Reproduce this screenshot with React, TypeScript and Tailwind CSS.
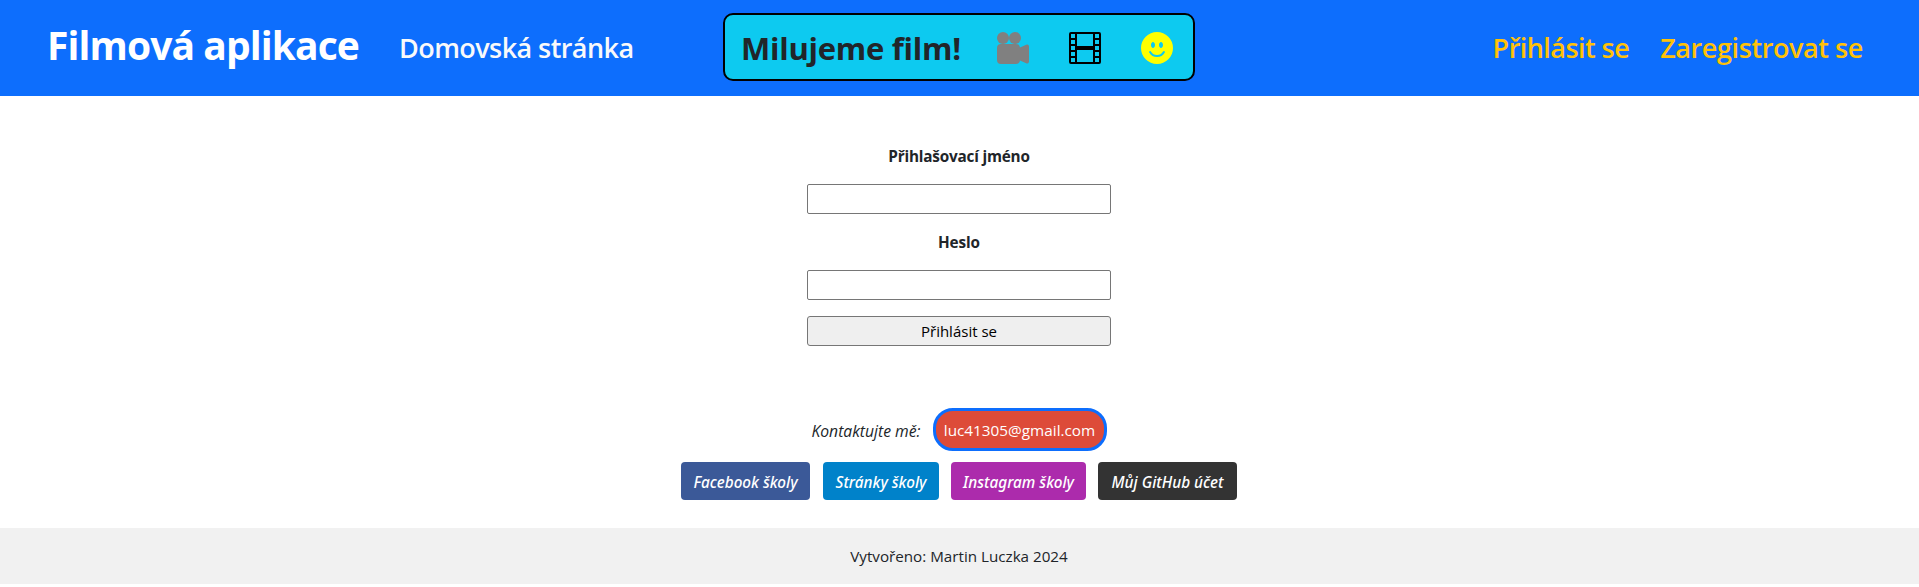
import { BsCameraReelsFill, BsEmojiSmileFill, BsFilm } from 'react-icons/bs';

const navLink = 'text-[27px] leading-[42px] font-semibold whitespace-nowrap';

function Header() {
  return (
    <header className="flex h-24 items-center justify-between bg-[#0d6efd] pr-14 pl-[47px]">
      <nav className="flex w-[676px] items-center">
        <a className="w-[352px] pb-[6px] text-[39px] leading-[60px] font-bold tracking-[-0.9px] whitespace-nowrap text-white">
          Filmová aplikace
        </a>
        <a className={`${navLink} tracking-[-0.57px] text-[#f8f9fa]`}>Domovská stránka</a>
      </nav>
      <div className="mb-[2px] flex h-[68px] w-[472px] items-center rounded-[10px] border-2 border-black bg-[#0dcaf0] pl-4">
        <h2 className="w-[256px] pt-[2px] text-[31px] leading-[40px] font-bold tracking-[-0.25px] whitespace-nowrap text-[#212529]">
          Milujeme film!
        </h2>
        <div className="flex gap-10 pt-[2px]">
          <BsCameraReelsFill className="size-8 text-[#808080]" />
          <BsFilm className="size-8 text-black" />
          <BsEmojiSmileFill className="size-8 text-[#ffff00]" />
        </div>
      </div>
      <nav className="flex w-[668px] justify-end text-[#ffc107]">
        <a className={`${navLink} mr-[31px] tracking-[-0.55px]`}>Přihlásit se</a>
        <a className={`${navLink} tracking-[-0.41px]`}>Zaregistrovat se</a>
      </nav>
    </header>
  );
}

function LoginForm() {
  return (
    <form className="mt-12 flex w-[304px] flex-col text-center">
      <label className="text-[15.3px] leading-6 font-bold tracking-[-0.2px]">Přihlašovací jméno</label>
      <input className="mt-4 h-[30px] rounded-[2px] border border-[#767676] bg-white px-1" />
      <label className="mt-4 text-[15.3px] leading-6 font-bold tracking-[-0.1px]">Heslo</label>
      <input type="password" className="mt-4 h-[30px] rounded-[2px] border border-[#767676] bg-white px-1" />
      <button
        type="button"
        className="mt-4 h-[30px] rounded-[3px] border border-[#767676] bg-[#efefef] text-[15px] leading-7 text-black"
      >
        Přihlásit se
      </button>
    </form>
  );
}

const social = "flex h-[38px] items-center justify-center rounded-[4px] pt-[2px] font-['Noto_Sans',sans-serif] text-[15.3px] font-medium italic whitespace-nowrap text-white";

function Contacts() {
  return (
    <section className="mt-[62px] flex flex-col items-center">
      <div className="flex h-[43px] items-center">
        <span className="w-[121px] pt-[2px] text-[15.7px] leading-6 whitespace-nowrap italic">Kontaktujte mě:</span>
        <a className="flex h-[43px] w-[174px] items-center justify-center rounded-[20px] border-3 border-[#0d6efd] bg-[#dd4b39] pt-px text-[15.3px] whitespace-nowrap text-white">
          luc41305@gmail.com
        </a>
      </div>
      <div className="mt-[11px] flex">
        <a className={`${social} mr-[13px] w-[129px] bg-[#3b5998]`}>Facebook školy</a>
        <a className={`${social} mr-3 w-[116px] bg-[#0082ca]`}>Stránky školy</a>
        <a className={`${social} mr-3 w-[135px] bg-[#ac2bac]`}>Instagram školy</a>
        <a className={`${social} w-[139px] bg-[#333333]`}>Můj GitHub účet</a>
      </div>
    </section>
  );
}

export default function App() {
  return (
    <div className="min-h-screen bg-white font-['Open_Sans',sans-serif] text-[#212529]">
      <Header />
      <main className="flex flex-col items-center pr-px">
        <LoginForm />
        <Contacts />
      </main>
      <footer className="mt-7 h-14 bg-[#f1f1f1] pr-px text-center text-[15.2px] leading-[56px]">
        Vytvořeno: Martin Luczka 2024
      </footer>
    </div>
  );
}
